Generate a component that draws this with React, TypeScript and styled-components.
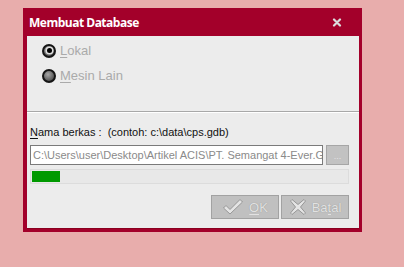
import React from "react";
import styled, { createGlobalStyle } from "styled-components";

const GlobalStyle = createGlobalStyle`
  html, body {
    margin: 0;
    padding: 0;
    background: #ffffff;
  }
`;

const Backdrop = styled.div`
  height: 267px;
  background: #e8adac;
  padding: 8px 0 0 23px;
  box-sizing: border-box;
`;

const Dialog = styled.div`
  width: 339px;
  height: 224px;
  background: #a3002a;
  box-sizing: border-box;
  display: flex;
  flex-direction: column;
  font-family: "Liberation Sans", Arial, sans-serif;
`;

const TitleBar = styled.div`
  height: 28px;
  display: flex;
  align-items: center;
  justify-content: space-between;
  padding: 0 20px 0 6px;
  color: #ffffff;
  font-family: "Open Sans", "Liberation Sans", sans-serif;
  font-weight: 700;
  font-size: 12px;
  letter-spacing: -0.5px;
`;

const Client = styled.div`
  flex: 1;
  margin: 0 3px 3px 4px;
  background: #ececec;
  display: flex;
  flex-direction: column;
  box-shadow: inset 0 -1px 0 #8a0020;
`;

const TopPanel = styled.div`
  height: 76px;
  box-sizing: border-box;
  border-bottom: 1px solid #a8a8a8;
  padding: 2px 15px 0;
  display: flex;
  flex-direction: column;
`;

const RadioRow = styled.div`
  height: 25px;
  display: flex;
  align-items: center;
  gap: 4px;
  color: #aaaaaa;
  font-size: 13px;
`;

const Radio = styled.span<{ $checked?: boolean }>`
  width: 14px;
  height: 14px;
  border-radius: 50%;
  box-sizing: border-box;
  border: 2px solid #151515;
  background: radial-gradient(circle at 40% 35%, #a8a8a8 0%, #6a6a6a 55%, #3a3a3a 100%);
  display: flex;
  align-items: center;
  justify-content: center;

  &::after {
    content: "";
    display: ${(p) => (p.$checked ? "block" : "none")};
    width: 5px;
    height: 5px;
    border-radius: 50%;
    background: #000;
    box-shadow: 0 0 0 1.5px #dcdcdc;
  }
`;

const Key = styled.span`
  text-decoration: underline;
  text-underline-offset: 2px;
`;

const BottomPanel = styled.div`
  flex: 1;
  border-top: 1px solid #ffffff;
  padding: 12px 10px 0 3px;
  display: flex;
  flex-direction: column;
`;

const Label = styled.div`
  font-size: 11px;
  color: #111;
  height: 20px;
  line-height: 14px;
  white-space: pre;
`;

const PathRow = styled.div`
  display: flex;
  gap: 3px;
  height: 20px;
`;

const PathInput = styled.input`
  flex: 1;
  min-width: 0;
  margin: 0;
  box-sizing: border-box;
  background: #ffffff;
  border: 1px solid #7a7a7a;
  border-radius: 0;
  color: #8a8a8a;
  font-family: "Liberation Sans", Arial, sans-serif;
  font-size: 11px;
  padding: 0 0 0 2px;
  outline: none;
`;

const BrowseButton = styled.div`
  width: 23px;
  box-sizing: border-box;
  background: #c2c2c2;
  border: 1px solid #a6a6a6;
  color: #e4e4e4;
  font-size: 9px;
  display: flex;
  align-items: flex-end;
  justify-content: center;
  padding-bottom: 3px;
`;

const Progress = styled.div`
  margin-top: 4px;
  height: 15px;
  box-sizing: border-box;
  background: #e8e8e8;
  border: 1px solid #dcdcdc;
  padding: 1px;
  display: flex;
`;

const ProgressFill = styled.div`
  background: #009900;
`;

const Buttons = styled.div`
  margin-top: 11px;
  display: flex;
  justify-content: flex-end;
  gap: 2px;
`;

const Button = styled.div`
  width: 68px;
  height: 24px;
  box-sizing: border-box;
  background: #c0c0c0;
  border: 1px solid #a2a2a2;
  display: flex;
  align-items: center;
  justify-content: center;
  gap: 5px;
  color: #e2e2e2;
  font-size: 13px;
  text-shadow: 0 0 1px #8a8a8a;
`;

const CheckIcon = () => (
  <svg width="22" height="18" viewBox="0 0 22 18">
    <path
      d="M1.5 10 L4 7.5 L8 11.5 L18 1.5 L20.5 4 L8 16 Z"
      fill="#e4e4e4"
      stroke="#909090"
      strokeWidth="0.9"
      strokeLinejoin="round"
    />
  </svg>
);

const CrossIcon = () => (
  <svg width="18" height="18" viewBox="0 0 18 18">
    <path
      d="M3 1.5 L9 6.5 L15 1.5 L16.5 3 L11.5 9 L16.5 15 L15 16.5 L9 11.5 L3 16.5 L1.5 15 L6.5 9 L1.5 3 Z"
      fill="#e4e4e4"
      stroke="#909090"
      strokeWidth="0.9"
      strokeLinejoin="round"
    />
  </svg>
);

const CloseIcon = () => (
  <svg width="10" height="9" viewBox="0 0 10 9">
    <path d="M2 1.5 L8 7.5 M8 1.5 L2 7.5" stroke="#dcdcdc" strokeWidth="2.2" strokeLinecap="round" />
  </svg>
);

export default function App() {
  const progress = 9;
  return (
    <>
      <GlobalStyle />
      <Backdrop>
        <Dialog>
          <TitleBar>
            <span>Membuat Database</span>
            <CloseIcon />
          </TitleBar>
          <Client>
            <TopPanel>
              <RadioRow>
                <Radio $checked />
                <span>
                  <Key>L</Key>okal
                </span>
              </RadioRow>
              <RadioRow>
                <Radio />
                <span>
                  <Key>M</Key>esin Lain
                </span>
              </RadioRow>
            </TopPanel>
            <BottomPanel>
              <Label>
                <Key>N</Key>
                {"ama berkas :  (contoh: c:\\data\\cps.gdb)"}
              </Label>
              <PathRow>
                <PathInput
                  readOnly
                  value={"C:\\Users\\user\\Desktop\\Artikel ACIS\\PT. Semangat 4-Ever.GDB"}
                />
                <BrowseButton>...</BrowseButton>
              </PathRow>
              <Progress>
                <ProgressFill style={{ width: `${progress}%` }} />
              </Progress>
              <Buttons>
                <Button>
                  <CheckIcon />
                  <span>
                    <Key>O</Key>K
                  </span>
                </Button>
                <Button>
                  <CrossIcon />
                  <span>
                    Ba<Key>t</Key>al
                  </span>
                </Button>
              </Buttons>
            </BottomPanel>
          </Client>
        </Dialog>
      </Backdrop>
    </>
  );
}
